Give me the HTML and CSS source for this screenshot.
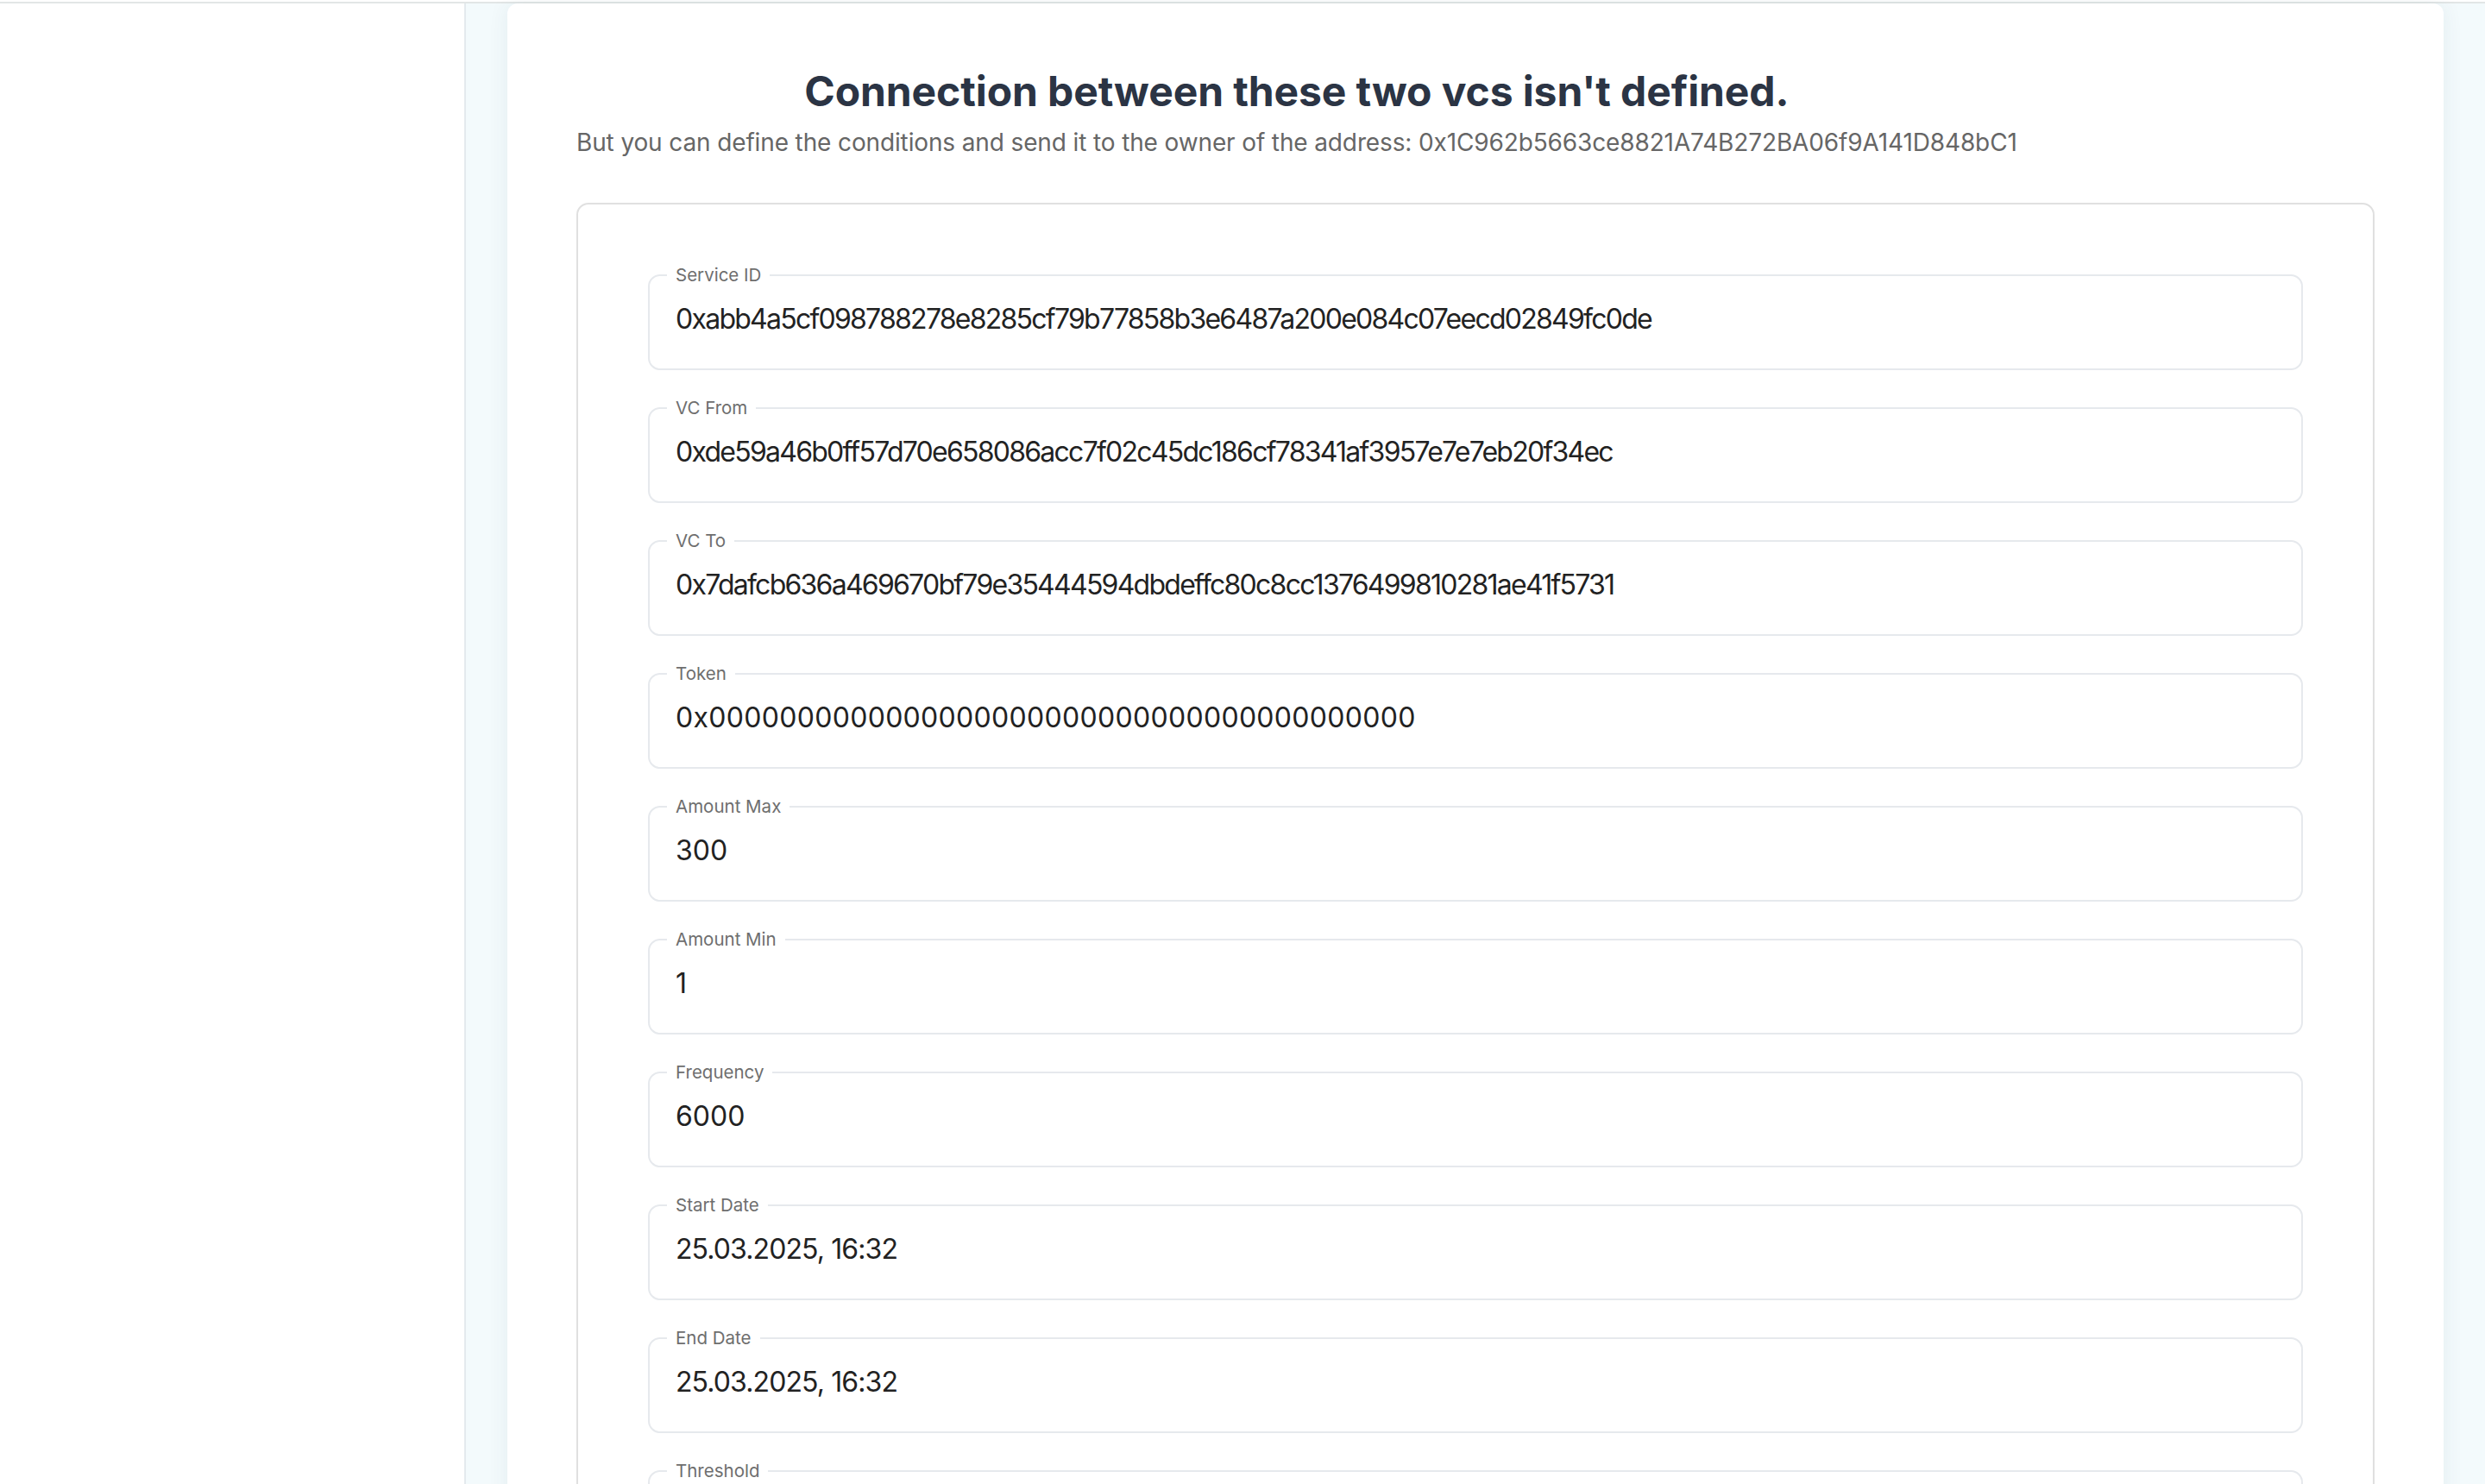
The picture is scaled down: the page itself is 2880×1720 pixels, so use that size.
FILE: index.html
```html
<!DOCTYPE html>
<html lang="en">
<head>
<meta charset="utf-8">
<title>Connection</title>
<link rel="stylesheet" href="styles.css">
</head>
<body>
<div class="topbar"></div>
<div class="layout">
  <aside class="sidebar"></aside>
  <main class="main">
    <section class="card">
      <header class="intro">
        <h1 class="title">Connection between these two vcs isn't defined.</h1>
        <p class="subtitle">But you can define the conditions and send it to the owner of the address: 0x1C962b5663ce8821A74B272BA06f9A141D848bC1</p>
      </header>
      <form class="form-box">
        <fieldset class="field"><legend class="field-label">Service ID</legend><div class="field-value hash">0xabb4a5cf098788278e8285cf79b77858b3e6487a200e084c07eecd02849fc0de</div></fieldset>
        <fieldset class="field"><legend class="field-label">VC From</legend><div class="field-value hash">0xde59a46b0ff57d70e658086acc7f02c45dc186cf78341af3957e7e7eb20f34ec</div></fieldset>
        <fieldset class="field"><legend class="field-label">VC To</legend><div class="field-value hash">0x7dafcb636a469670bf79e35444594dbdeffc80c8cc1376499810281ae41f5731</div></fieldset>
        <fieldset class="field"><legend class="field-label">Token</legend><div class="field-value zeros">0x0000000000000000000000000000000000000000</div></fieldset>
        <fieldset class="field"><legend class="field-label">Amount Max</legend><div class="field-value">300</div></fieldset>
        <fieldset class="field"><legend class="field-label">Amount Min</legend><div class="field-value">1</div></fieldset>
        <fieldset class="field"><legend class="field-label">Frequency</legend><div class="field-value">6000</div></fieldset>
        <fieldset class="field"><legend class="field-label">Start Date</legend><div class="field-value date">25.03.2025, 16:32</div></fieldset>
        <fieldset class="field"><legend class="field-label">End Date</legend><div class="field-value date">25.03.2025, 16:32</div></fieldset>
        <fieldset class="field"><legend class="field-label">Threshold</legend><div class="field-value">1</div></fieldset>
      </form>
    </section>
  </main>
</div>
</body>
</html>
```

FILE: styles.css
```css
* { box-sizing: border-box; }
html, body { margin: 0; height: 100%; overflow: hidden; background: #fff; }
body { font-family: Inter, "Noto Sans", sans-serif; color: #202020; }

.topbar { height: 4px; border-bottom: 2px solid #e2e6e6; background: #fff; }

.layout { display: flex; min-height: calc(100% - 4px); }

.sidebar { width: 540px; flex: none; background: #fff; border-right: 2px solid #e4eaee; }

.main { flex: 1; min-width: 0; background: #f3fafc; padding: 0 48px; }

.card {
  background: #fff;
  border-radius: 12px 12px 0 0;
  box-shadow: 0 0 24px rgba(0, 70, 90, 0.07);
  padding: 73px 80px 80px;
}

.intro { width: fit-content; text-align: center; }

.title {
  margin: 0;
  font-size: 48px;
  font-weight: 700;
  line-height: 57px;
  color: #2b3444;
  letter-spacing: -0.1px;
}

.subtitle {
  margin: 11px 0 0;
  font-size: 28px;
  line-height: 40px;
  color: #666;
  text-align: left;
  white-space: nowrap;
  letter-spacing: -0.13px;
}

.form-box {
  margin-top: 50px;
  border: 2px solid #e0e0e0;
  border-radius: 14px;
  padding: 69px 81px 80px;
  display: flex;
  flex-direction: column;
  gap: 31px;
}

.field {
  margin: 0;
  border: 2px solid #e6e9ed;
  border-radius: 14px;
  padding: 18px 30px 37px;
  min-width: 0;
}

.field-label {
  margin-left: -10px;
  padding: 0 10px;
  font-size: 20.5px;
  line-height: 26px;
  color: #6e6e6e;
}

.field-value {
  font-size: 32px;
  line-height: 40px;
  color: #222;
  white-space: nowrap;
}

.field-value.hash { letter-spacing: -1.75px; }
.field-value.zeros { letter-spacing: 0.3px; }
.field-value.date { letter-spacing: -0.9px; }
```
